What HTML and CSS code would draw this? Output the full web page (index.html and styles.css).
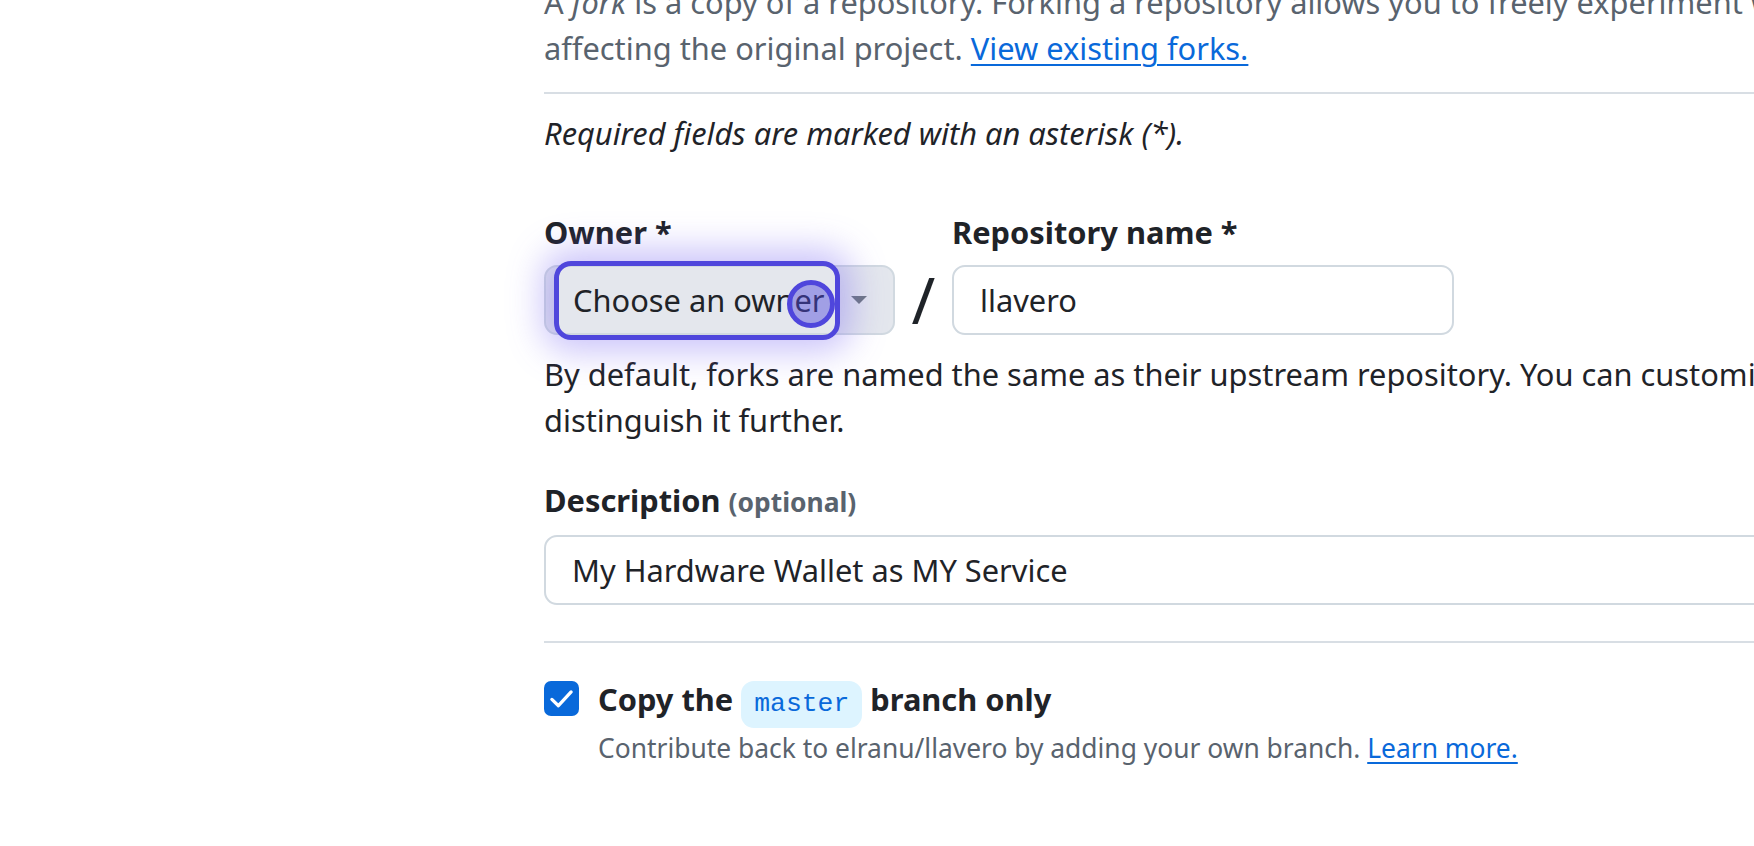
FILE: index.html
```html
<!DOCTYPE html>
<html lang="en">
<head>
<meta charset="utf-8">
<title>Create a new fork</title>
<link rel="stylesheet" href="styles.css">
</head>
<body>
<main class="page">
  <p class="intro">A <em>fork</em> is a copy of a repository. Forking a repository allows you to freely experiment with changes without affecting the original project. <a href="#" class="link">View existing forks.</a></p>
  <hr class="divider divider-top">
  <p class="required">Required fields are marked with an asterisk (*).</p>

  <div class="name-row">
    <div class="field owner-field">
      <label class="field-label">Owner *</label>
      <div class="select-wrap">
        <button class="owner-select" type="button">
          <span>Choose an owner</span>
          <svg class="caret" width="16" height="8" viewBox="0 0 16 8"><polygon points="0,0 16,0 8,8" fill="#6e7781"/></svg>
        </button>
        <div class="focus-ring"></div>
        <div class="click-dot"></div>
      </div>
    </div>
    <span class="slash">/</span>
    <div class="field repo-field">
      <label class="field-label">Repository name *</label>
      <input class="text-input repo-input" type="text" value="llavero">
    </div>
  </div>

  <p class="note">By default, forks are named the same as their upstream repository. You can customize the name to distinguish it further.</p>

  <div class="field desc-field">
    <label class="field-label">Description <span class="optional">(optional)</span></label>
    <input class="text-input desc-input" type="text" value="My Hardware Wallet as MY Service">
  </div>

  <hr class="divider divider-bottom">

  <div class="copy-row">
    <span class="checkbox">
      <svg width="35" height="35" viewBox="0 0 16 16"><polyline points="3.6,8.4 6.6,11.3 12.4,5" fill="none" stroke="#ffffff" stroke-width="1.5" stroke-linecap="round" stroke-linejoin="round"/></svg>
    </span>
    <div class="copy-text">
      <div class="copy-label">Copy the <code class="branch">master</code> branch only</div>
      <p class="copy-note">Contribute back to elranu/llavero by adding your own branch. <a href="#" class="link">Learn more.</a></p>
    </div>
  </div>
</main>
</body>
</html>
```

FILE: styles.css
```css
html, body {
  margin: 0;
  padding: 0;
  overflow: hidden;
  background: #ffffff;
}

body {
  font-family: "Noto Sans", "Liberation Sans", sans-serif;
  font-size: 30.8px;
  line-height: 46.2px;
  color: #1f2328;
}

.page {
  margin-left: 544px;
  width: 1550px;
}

.intro {
  margin: -21px 0 0;
  color: #59636e;
}

.link {
  color: #0969da;
  text-decoration: underline;
  text-decoration-thickness: 2px;
  text-underline-offset: 4px;
}

.divider {
  border: 0;
  height: 2px;
  background: #d8dee4;
  margin: 0;
}

.divider-top {
  margin-top: 21px;
}

.required {
  margin: 16px 0 0;
  font-style: italic;
}

.name-row {
  display: flex;
  align-items: flex-end;
  margin-top: 52px;
}

.field {
  display: flex;
  flex-direction: column;
}

.field-label {
  font-weight: 700;
  margin-bottom: 10px;
}

.optional {
  font-size: 26.4px;
  color: #59636e;
}

.owner-field {
  width: 351px;
}

.select-wrap {
  position: relative;
  height: 70px;
}

.owner-select {
  box-sizing: border-box;
  width: 351px;
  height: 70px;
  display: flex;
  align-items: center;
  justify-content: space-between;
  padding: 0 26px 0 27px;
  background: #e4e7ed;
  border: 2px solid #d1d9e0;
  border-radius: 13px;
  font-family: inherit;
  font-size: 30.8px;
  color: #1f2328;
}

.caret {
  display: block;
}

.focus-ring {
  position: absolute;
  left: 10px;
  top: -4px;
  width: 286px;
  height: 79px;
  box-sizing: border-box;
  border: 5px solid #4f46dc;
  border-radius: 17px;
  box-shadow: 0 0 34px 12px rgba(110, 92, 240, 0.36);
}

.click-dot {
  position: absolute;
  left: 243px;
  top: 15px;
  width: 48px;
  height: 48px;
  box-sizing: border-box;
  border: 5px solid #4f46dc;
  border-radius: 50%;
  background: rgba(79, 70, 220, 0.45);
}

.slash {
  width: 57px;
  height: 70px;
  text-align: center;
  font-size: 64px;
  line-height: 70px;
  color: #1f2328;
}

.repo-field {
  width: 502px;
}

.text-input {
  box-sizing: border-box;
  height: 70px;
  padding: 0 25px 0 26px;
  border: 2px solid #d1d9e0;
  border-radius: 13px;
  background: #ffffff;
  font-family: inherit;
  font-size: 30.8px;
  color: #1f2328;
  outline: none;
}

.repo-input {
  width: 502px;
}

.desc-input {
  width: 100%;
}

.note {
  margin: 16px 0 0;
}

.desc-field {
  margin-top: 34px;
}

.divider-bottom {
  margin-top: 36px;
}

.copy-row {
  display: flex;
  align-items: flex-start;
  margin-top: 33px;
}

.checkbox {
  flex: none;
  width: 35px;
  height: 35px;
  margin-top: 5px;
  margin-right: 19px;
  background: #0969da;
  border-radius: 7px;
  display: flex;
  align-items: center;
  justify-content: center;
}

.checkbox svg {
  display: block;
}

.copy-label {
  font-weight: 700;
}

.branch {
  display: inline-block;
  padding: 8px 13px;
  line-height: 31px;
  font-family: "Liberation Mono", "DejaVu Sans Mono", monospace;
  font-size: 26.4px;
  font-weight: 400;
  color: #0969da;
  background: #ddf4ff;
  border-radius: 13px;
  vertical-align: baseline;
}

.copy-note {
  margin: 1px 0 0;
  font-size: 26.4px;
  line-height: 39.6px;
  color: #59636e;
}
```
